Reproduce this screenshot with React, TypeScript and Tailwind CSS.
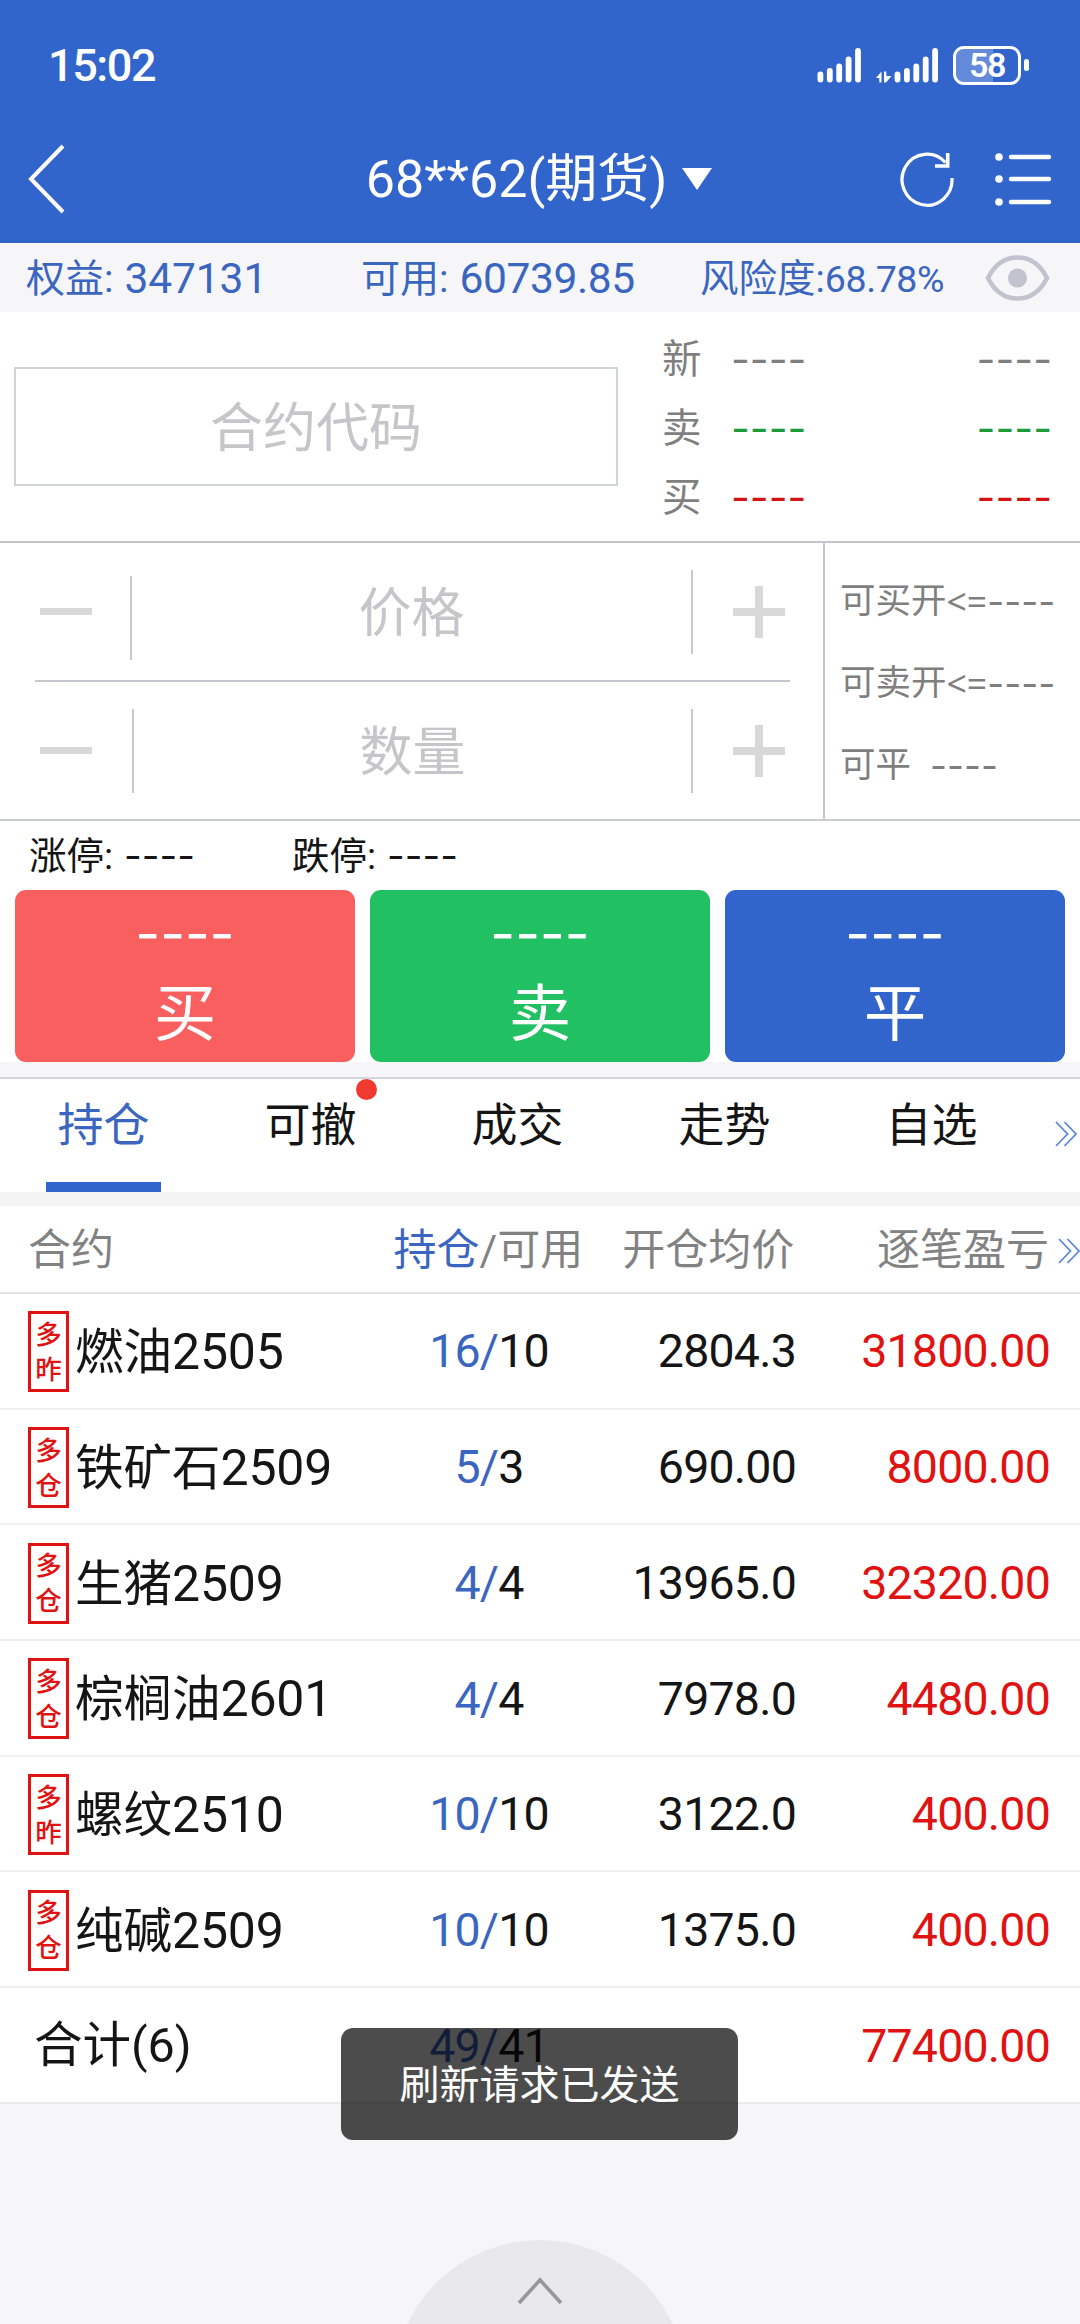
import { clsx } from 'clsx';

interface Position {
    tag: [string, string];
    name: string;
    code: string;
    held: string;
    available: string;
    price: string;
    profit: string;
}

const POSITIONS: Position[] = [
    { tag: ['多', '昨'], name: '燃油', code: '2505', held: '16', available: '10', price: '2804.3', profit: '31800.00' },
    { tag: ['多', '仓'], name: '铁矿石', code: '2509', held: '5', available: '3', price: '690.00', profit: '8000.00' },
    { tag: ['多', '仓'], name: '生猪', code: '2509', held: '4', available: '4', price: '13965.0', profit: '32320.00' },
    { tag: ['多', '仓'], name: '棕榈油', code: '2601', held: '4', available: '4', price: '7978.0', profit: '4480.00' },
    { tag: ['多', '昨'], name: '螺纹', code: '2510', held: '10', available: '10', price: '3122.0', profit: '400.00' },
    { tag: ['多', '仓'], name: '纯碱', code: '2509', held: '10', available: '10', price: '1375.0', profit: '400.00' },
];

const QUOTES = [
    { label: '新', color: 'text-[#7f7f7f]' },
    { label: '卖', color: 'text-[#1d9a3a]' },
    { label: '买', color: 'text-[#d01414]' },
];

const ORDER_BUTTONS = [
    { label: '买', color: 'bg-[#fa5f5f]' },
    { label: '卖', color: 'bg-[#21c063]' },
    { label: '平', color: 'bg-[#3165cc]' },
];

const TABS = ['持仓', '可撤', '成交', '走势', '自选'];

// Empty value placeholder
function Dashes({ className }: { className?: string }) {
    return <span className={clsx("font-['Inter']", className)}>----</span>;
}

function DoubleChevron({ className }: { className?: string }) {
    return (
        <svg className={className} width="22" height="26" viewBox="0 0 22 26" fill="none" stroke="#5b86d6" strokeWidth="1.8">
            <path d="M1 1 L12.5 13 L1 25" />
            <path d="M9.5 1 L21 13 L9.5 25" />
        </svg>
    );
}

function StatusBar() {
    const bars = [11, 14.5, 19, 26, 34.5];

    return (
        <div className="flex h-[130px] items-center justify-between pl-12 pr-[51px]">
            <span className="text-[45px] font-medium leading-none tracking-[-1.4px]">15:02</span>
            <div className="flex items-center">
                <svg width="122" height="36" viewBox="0 0 122 36" fill="white">
                    {bars.map((h, i) => (
                        <rect key={i} x={0.5 + i * 9.4} y={35.5 - h} width="5.8" height={h} rx="2.9" />
                    ))}
                    {/* Data up / down arrows */}
                    <path d="M59 31 L64.5 24.5 V35.5 H62.3 V31 Z M67 24.5 H69.3 V29 H74.5 L69 35.5 H67 Z" />
                    {bars.map((h, i) => (
                        <rect key={i} x={77.6 + i * 9.4} y={35.5 - h} width="5.8" height={h} rx="2.9" />
                    ))}
                </svg>
                <div className="relative ml-3.5 flex h-[39px] w-[68px] items-center justify-center overflow-hidden rounded-[11px] border-[3px] border-white">
                    <div className="absolute inset-y-0 left-0 w-[37px] bg-white/25" />
                    <span className="relative text-[34px] font-semibold leading-none tracking-[-1.5px]">58</span>
                </div>
                <div className="ml-[3px] h-3 w-[5px] rounded-full bg-white" />
            </div>
        </div>
    );
}

function TitleBar() {
    return (
        <div className="flex h-[113px] items-center pb-[15px] pl-7 pr-7">
            <svg width="38" height="70" viewBox="0 0 38 70" fill="none" stroke="white" strokeWidth="4">
                <path d="M35 2 L3 35 L35 68" />
            </svg>
            <div className="flex flex-1 items-center justify-center pl-[114px]">
                <span className="pt-0.5 text-[52px] leading-none">68**62(期货)</span>
                <svg className="ml-3.5" width="32" height="24" viewBox="0 0 32 24" fill="white">
                    <path d="M1 1 H31 L16 23 Z" />
                </svg>
            </div>
            <svg className="mr-[39px]" width="56" height="56" viewBox="0 0 56 56" fill="none" stroke="white" strokeWidth="3.2">
                <path d="M53 27 A25 25.5 0 1 1 46.5 11.5" />
                <path d="M48.7 2 V15 H36" strokeWidth="3.6" />
            </svg>
            <svg width="58" height="54" viewBox="0 0 58 54" stroke="white" strokeWidth="4.4" strokeLinecap="round">
                {[5, 27, 50].map(y => (
                    <g key={y}>
                        <circle cx="5" cy={y} r="3.8" fill="white" stroke="none" />
                        <path d={`M17 ${y} H55`} />
                    </g>
                ))}
            </svg>
        </div>
    );
}

function AccountBar() {
    return (
        <div className="flex h-[69px] items-center bg-[#f6f6f8] text-[#3b66bf]">
            <div className="flex w-[335px] items-center pl-[26px] pt-[3px] text-[39px]">
                权益:<span className="ml-[11px] text-[42.5px] tracking-[-0.1px]">347131</span>
            </div>
            <div className="flex w-[338px] items-center pl-[26px] pt-[3px] text-[39px]">
                可用:<span className="ml-[11px] text-[42.5px] tracking-[-0.4px]">60739.85</span>
            </div>
            <div className="flex flex-1 items-center pl-[27px] pt-[3px] text-[38.5px]">
                风险度:<span className="text-[37.5px] tracking-[-0.4px]">68.78%</span>
            </div>
            <svg className="mr-[30px]" width="65" height="48" viewBox="0 0 65 48" fill="none" stroke="#c3c3d0" strokeWidth="4.6">
                <path d="M3 24 C10 10 21 3.5 32.5 3.5 C44 3.5 55 10 62 24 C55 38 44 44.5 32.5 44.5 C21 44.5 10 38 3 24 Z" />
                <circle cx="32.5" cy="24" r="9.6" fill="#c3c3d0" stroke="none" />
            </svg>
        </div>
    );
}

function QuotePanel() {
    return (
        <div className="flex h-[231px] border-b-2 border-[#c3c7cd]">
            <div className="ml-3.5 mt-[55px] flex h-[119px] w-[604px] items-center justify-center border-2 border-[#d0d3d8] pt-1.5 text-[53px] text-[#c6c6ca]">
                合约代码
            </div>
            <div className="ml-[44px] mr-[28px] flex flex-1 flex-col pt-[13px]">
                {QUOTES.map(({ label, color }) => (
                    <div key={label} className="flex h-[69px] items-center">
                        <span className="w-[69px] pt-px text-[39.5px] text-[#7f7f7f]">{label}</span>
                        <Dashes className={clsx('flex-1 text-[41px]', color)} />
                        <Dashes className={clsx('text-[41px]', color)} />
                    </div>
                ))}
            </div>
        </div>
    );
}

function Stepper({ label, first }: { label: string; first?: boolean }) {
    return (
        <div className="flex h-[137px] items-center">
            <div className="ml-10 h-[7px] w-[52px] bg-[#d8d8d8]" />
            <div className={clsx('h-[84px] w-0.5 bg-[#c6cace]', first ? 'ml-[38px] mt-3' : 'ml-10')} />
            <div className="flex-1 pt-1.5 text-center text-[53px] text-[#c6c6ca]">{label}</div>
            <div className="h-[84px] w-0.5 bg-[#c6cace]" />
            <svg className="ml-10 mr-[38px]" width="52" height="52" viewBox="0 0 52 52" fill="#d8d8d8">
                <path d="M22 0 H30 V22 H52 V30 H30 V52 H22 V30 H0 V22 H22 Z" />
            </svg>
        </div>
    );
}

function OrderForm() {
    return (
        <div className="flex h-[278px] border-b-2 border-[#c8ccd1]">
            <div className="w-[825px] border-r-2 border-[#c6c8cc]">
                <Stepper label="价格" first />
                <div className="ml-[35px] mr-[33px] h-0.5 bg-[#c4c7cb]" />
                <Stepper label="数量" />
            </div>
            <div className="flex-1 pl-[15px] pt-[18px] text-[35.5px] text-[#7f7f7f]">
                {['可买开', '可卖开'].map(label => (
                    <div key={label} className="flex h-[82px] items-center">
                        {label}
                        <span className="font-['Noto_Sans']">&lt;=</span>
                        <Dashes className="text-[37px]" />
                    </div>
                ))}
                <div className="flex h-[82px] items-center">
                    可平<Dashes className="ml-[19px] text-[37px]" />
                </div>
            </div>
        </div>
    );
}

function OrderButtons() {
    return (
        <>
            <div className="flex h-[69px] items-center pl-[29px] pt-px text-[37.5px] text-[#151515]">
                <div className="flex w-[263px] items-center">
                    涨停:<Dashes className="ml-[11px] text-[38.5px]" />
                </div>
                <div className="flex items-center">
                    跌停:<Dashes className="ml-[11px] text-[38.5px]" />
                </div>
            </div>
            <div className="grid grid-cols-3 gap-[15px] px-[15px]">
                {ORDER_BUTTONS.map(({ label, color }) => (
                    <button key={label} className={clsx('flex h-[172px] flex-col items-center rounded-[11px] text-white', color)}>
                        <Dashes className="mt-[14px] text-[54px] leading-[60px]" />
                        <span className="mt-[19px] text-[62.5px] leading-[64px]">{label}</span>
                    </button>
                ))}
            </div>
            <div className="h-[17px] border-b-2 border-[#d3d6dc] bg-[#f6f6f8]" />
        </>
    );
}

function Tabs() {
    return (
        <div className="flex h-[113px]">
            {TABS.map((tab, i) => (
                <div key={tab} className="flex w-[207px] flex-col items-center">
                    <div className={clsx('relative mt-[13px] text-[46px] leading-[66px]', i === 0 ? 'text-[#3b66bf]' : 'text-[#151515]')}>
                        {tab}
                        {tab === '可撤' && (
                            <span className="absolute -right-[20px] -top-[13px] size-[21px] rounded-full bg-[#f03a2f]" />
                        )}
                    </div>
                    {i === 0 && <div className="mt-auto h-[10px] w-[115px] bg-[#3165cc]" />}
                </div>
            ))}
            <DoubleChevron className="ml-5 mt-[42px] shrink-0" />
        </div>
    );
}

function PositionTable() {
    return (
        <div className="bg-white">
            <div className="flex h-[88px] items-center border-b-2 border-[#e2e4ea] pt-[3px] text-[43px] text-[#828282]">
                <span className="w-[394px] pl-[28px]">合约</span>
                <span className="w-[187px] whitespace-nowrap text-center">
                    <span className="text-[#3b66bf]">持仓</span>/可用
                </span>
                <span className="w-[214px] text-right">开仓均价</span>
                <span className="w-[255px] text-right">逐笔盈亏</span>
                <DoubleChevron className="ml-[9px] shrink-0" />
            </div>
            {POSITIONS.map(p => (
                <div key={p.name} className="flex h-[115.7px] items-center border-b-2 border-[#eeeff1] text-[46.5px] tracking-[-0.8px] text-[#151515]">
                    <div className="flex w-[381px] items-center pl-[28px]">
                        <div className="mt-0.5 flex h-[81px] w-[41px] flex-col items-center justify-center border-[3px] border-[#e01212] text-[26.5px] font-medium leading-[35px] tracking-normal text-[#e01212]">
                            <span>{p.tag[0]}</span>
                            <span>{p.tag[1]}</span>
                        </div>
                        <span className="ml-1.5 pt-1 text-[48.5px] tracking-normal">
                            {p.name}<span className="text-[50px] tracking-[-0.2px]">{p.code}</span>
                        </span>
                    </div>
                    <span className="w-[216px] pt-[3px] text-center">
                        <span className="text-[#3b66bf]">{p.held}/</span>{p.available}
                    </span>
                    <span className="w-[199px] pt-[3px] text-right">{p.price}</span>
                    <span className="w-[254px] pt-[3px] text-right text-[#e01212]">{p.profit}</span>
                </div>
            ))}
            <div className="flex h-[115.7px] items-center border-b-2 border-[#ebebee] pt-[3px] text-[46.5px] tracking-[-0.8px] text-[#151515]">
                <span className="w-[381px] pl-[34px] text-[48.5px] tracking-normal">合计(6)</span>
                <span className="w-[216px] text-center">
                    <span className="text-[#3b66bf]">49/</span>41
                </span>
                <span className="w-[453px] text-right text-[#e01212]">77400.00</span>
            </div>
        </div>
    );
}

export default function App() {
    return (
        <div className="relative flex h-[2324px] w-[1080px] flex-col overflow-hidden bg-[#f6f6f8] font-['Roboto','Noto_Sans_CJK_SC',sans-serif]">
            <header className="bg-[#3165cc] text-white">
                <StatusBar />
                <TitleBar />
            </header>
            <AccountBar />
            <div className="bg-white">
                <QuotePanel />
                <OrderForm />
                <OrderButtons />
                <Tabs />
            </div>
            <div className="h-[14px] shrink-0 bg-[#f4f4f4]" />
            <PositionTable />

            {/* Pull-up handle */}
            <div className="mx-auto mt-auto flex h-[84px] w-[294px] justify-center overflow-hidden">
                <div className="flex size-[294px] shrink-0 justify-center rounded-full bg-[#e9e9eb] pt-[37px]">
                    <svg width="46" height="28" viewBox="0 0 46 28" fill="none" stroke="#979797" strokeWidth="3.6">
                        <path d="M2 26 L23 3 L44 26" />
                    </svg>
                </div>
            </div>

            {/* Toast */}
            <div className="absolute left-[341px] top-[2028px] flex h-[112px] w-[397px] items-center justify-center rounded-xl bg-black/70 pt-1 text-[40px] text-white">
                刷新请求已发送
            </div>
        </div>
    );
}
